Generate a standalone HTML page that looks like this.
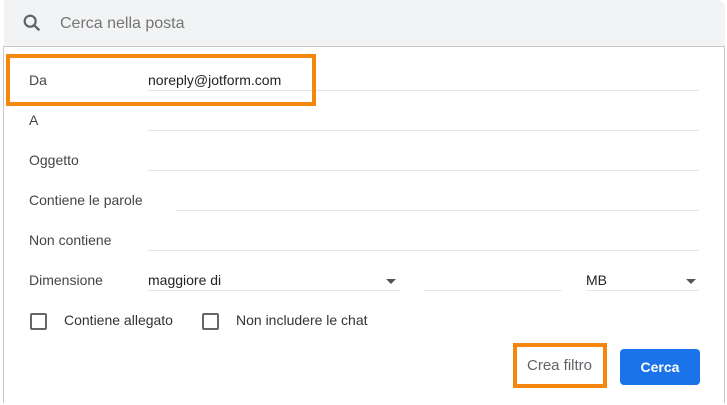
<!DOCTYPE html><html><head><style>
html,body{margin:0;width:727px;height:405px;overflow:hidden}
body{background:#fff;font-family:"Liberation Sans",Arial,sans-serif;position:relative}
.a{position:absolute}
.lbl{position:absolute;font-size:14px;color:#444;line-height:16px}
.ln{position:absolute;height:1px;background:#e6e6e6}
.cb{position:absolute;width:13px;height:13px;border:2px solid #666;border-radius:2px}
.arr{position:absolute;width:0;height:0;border-left:5px solid transparent;border-right:5px solid transparent;border-top:5px solid #555}
</style></head><body>
<div class="a" style="left:4px;top:0;width:721px;height:47px;background:#f1f3f4;border-top-right-radius:8px"></div>
<svg class="a" style="left:21px;top:12px" width="22" height="22" viewBox="0 0 24 24"><circle cx="10" cy="10" r="6" fill="none" stroke="#5f6368" stroke-width="2.4"/><path d="M14.5 14.5L20 20" stroke="#5f6368" stroke-width="2.6"/></svg>
<div class="a" style="left:60px;top:15px;font-size:16px;color:#757575">Cerca nella posta</div>
<div class="a" style="left:3px;top:46px;width:720px;height:356px;border:1px solid #c8c8c8;border-bottom:none;background:#fff"></div>
<div class="lbl" style="left:29px;top:72px">Da</div>
<div class="lbl" style="left:148px;top:72px;color:#222">noreply@jotform.com</div>
<div class="ln" style="left:148px;top:90px;width:551px"></div>
<div class="lbl" style="left:29px;top:112px">A</div>
<div class="ln" style="left:148px;top:130px;width:551px"></div>
<div class="lbl" style="left:29px;top:152px">Oggetto</div>
<div class="ln" style="left:148px;top:170px;width:551px"></div>
<div class="lbl" style="left:29px;top:192px">Contiene le parole</div>
<div class="ln" style="left:176px;top:210px;width:523px"></div>
<div class="lbl" style="left:29px;top:232px">Non contiene</div>
<div class="ln" style="left:148px;top:250px;width:551px"></div>
<div class="lbl" style="left:29px;top:272px">Dimensione</div>
<div class="lbl" style="left:148px;top:272px;color:#222">maggiore di</div>
<div class="arr" style="left:386px;top:279px"></div>
<div class="ln" style="left:148px;top:290px;width:252px"></div>
<div class="ln" style="left:424px;top:290px;width:138px"></div>
<div class="lbl" style="left:586px;top:272px;color:#222">MB</div>
<div class="arr" style="left:686px;top:279px"></div>
<div class="ln" style="left:586px;top:290px;width:113px"></div>
<div class="cb" style="left:30px;top:313px"></div>
<div class="lbl" style="left:64px;top:312px;color:#333">Contiene allegato</div>
<div class="cb" style="left:202px;top:313px"></div>
<div class="lbl" style="left:236px;top:312px;color:#333">Non includere le chat</div>
<div class="a" style="left:513px;top:343px;width:86px;height:37px;border:4px solid #f5870f"></div>
<div class="lbl" style="left:527px;top:358px;color:#5f6368;font-size:15px">Crea filtro</div>
<div class="a" style="left:620px;top:349px;width:80px;height:36px;background:#1a73e8;border-radius:4px;color:#fff;font-size:14px;font-weight:bold;text-align:center;line-height:36px">Cerca</div>
<div class="a" style="left:6px;top:54px;width:302px;height:44px;border:4px solid #f5870f"></div>
</body></html>
